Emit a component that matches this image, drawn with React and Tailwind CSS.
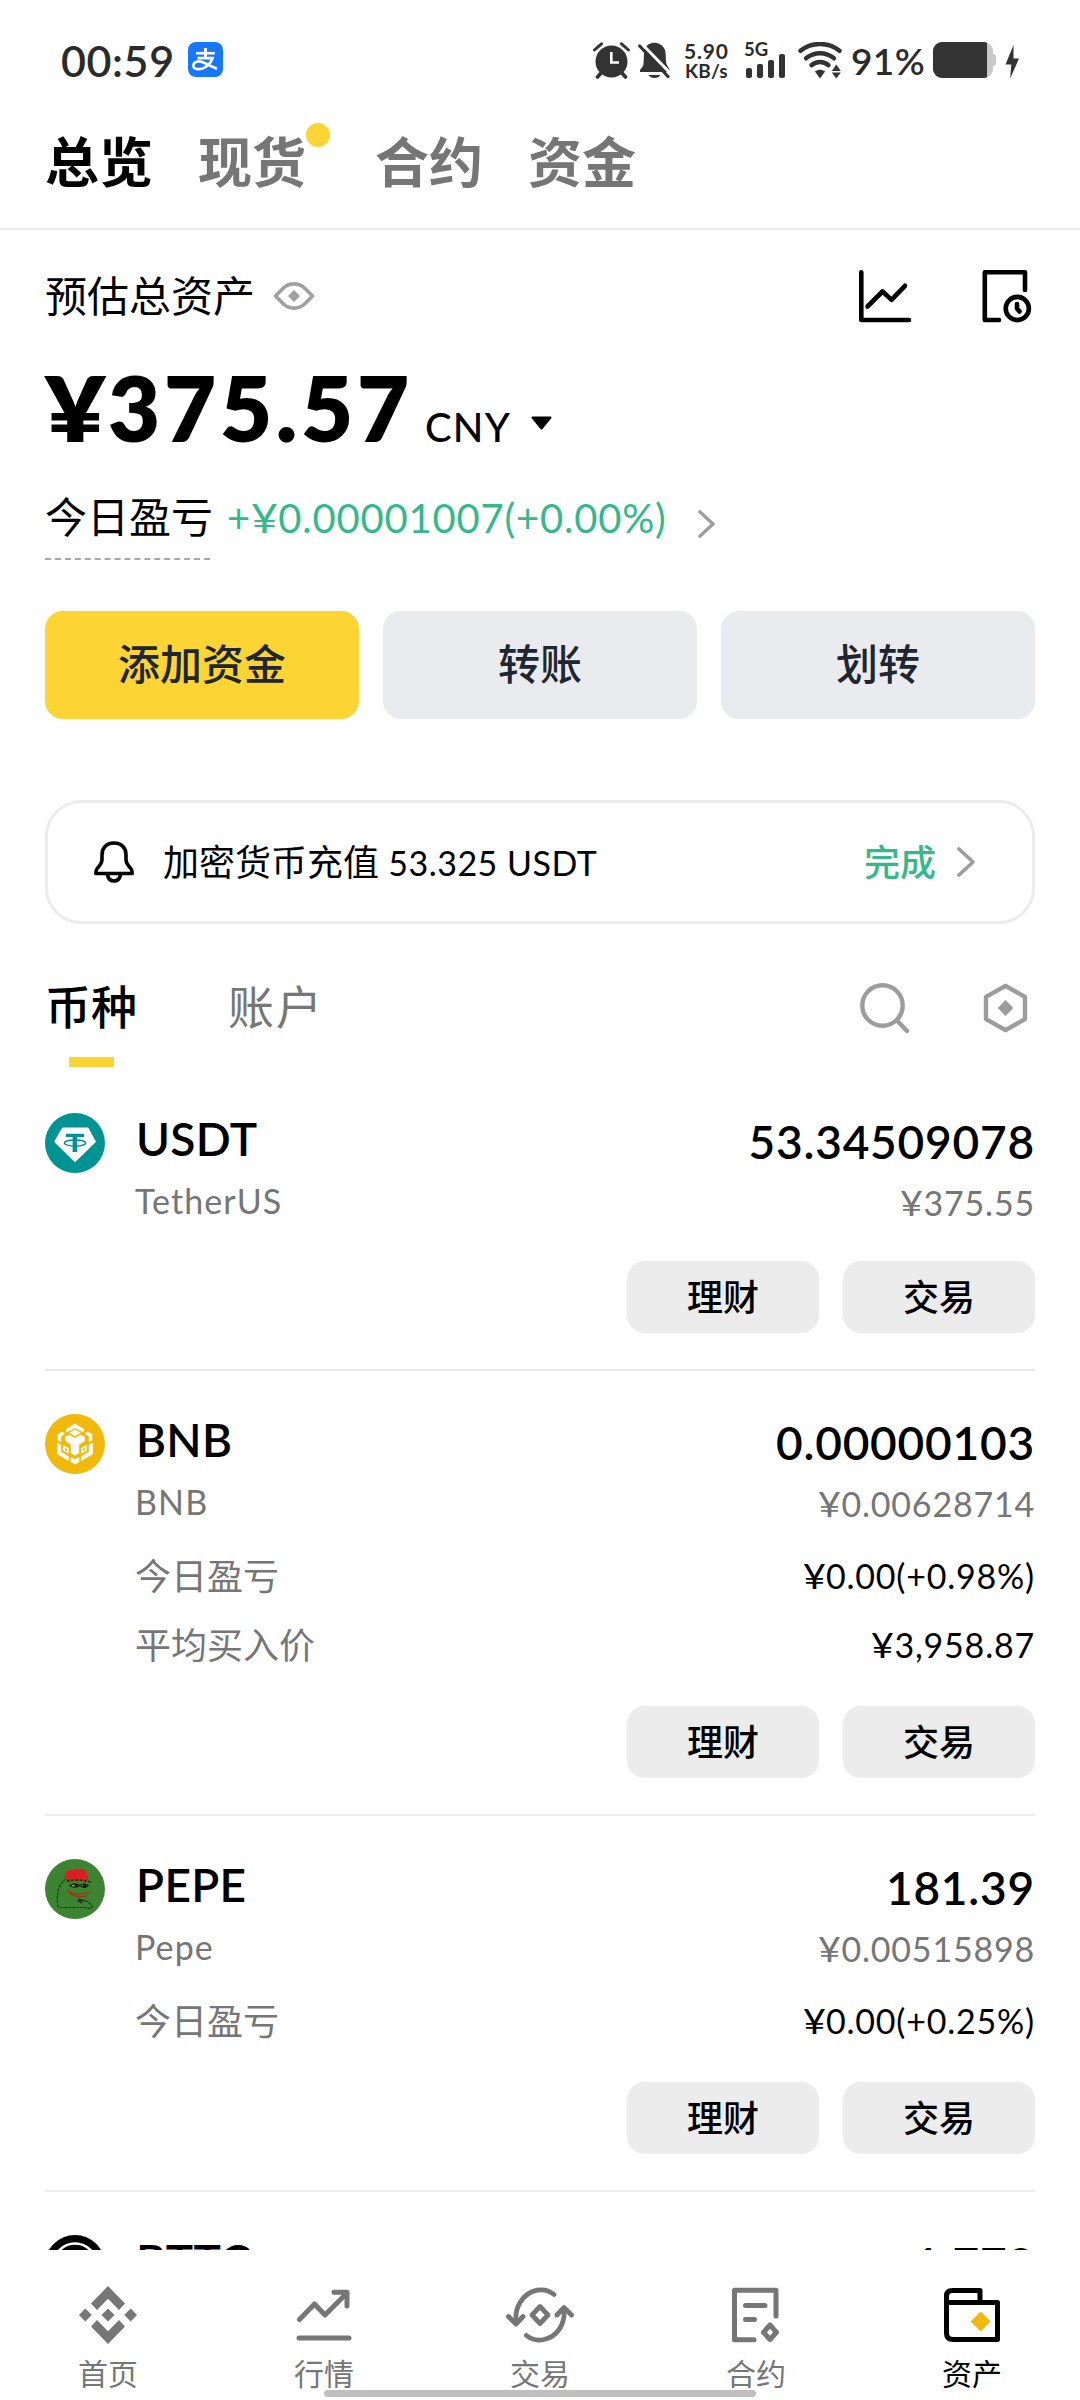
import React from 'react';

/* ---------- status bar icons ---------- */

function AlipayIcon() {
  return (
    <svg width="35" height="35" viewBox="0 0 35 35" className="block">
      <rect width="35" height="35" rx="8" fill="#1677ff" />
      <g fill="none" stroke="#fff" strokeLinecap="butt">
        <path d="M8 11.2H27" strokeWidth="2.6" />
        <path d="M17.5 6V16" strokeWidth="3" />
        <path d="M9.5 16.2H24.5C23.5 19.5 21 22.8 17.5 25C13 28 5.8 28 5.4 23.8C5.2 20 9.8 18.6 14 20C18.5 21.5 23 24.6 29 26.6" strokeWidth="2.7" />
      </g>
    </svg>
  );
}

function AlarmIcon() {
  return (
    <svg width="37" height="37" viewBox="0 0 37 37" className="block">
      <circle cx="18.5" cy="19.5" r="16" fill="#333" />
      <path d="M1.5 8L8.5 1.8M35.5 8L28.5 1.8" stroke="#333" strokeWidth="3" strokeLinecap="round" />
      <path d="M8 31L4.5 35M29 31L32.5 35" stroke="#333" strokeWidth="3.6" strokeLinecap="round" />
      <path d="M18.3 10V20.5H26" fill="none" stroke="#fff" strokeWidth="2.6" />
    </svg>
  );
}

function MutedBellIcon() {
  return (
    <svg width="33" height="37" viewBox="0 0 33 37" className="block">
      <path d="M7 7C10 -1.5 23 -1.5 27 8C28.5 13 27 19 29 23L32 28.5V30H2V28L5 24C6.5 20 5 12 7 7Z" fill="#333" />
      <path d="M10.5 33H22.5C20.5 37 12.5 37 10.5 33Z" fill="#333" />
      <path d="M3.5 1.5L34 33" stroke="#fff" strokeWidth="3" />
      <path d="M1.7 4L30 34.5" stroke="#333" strokeWidth="3.2" strokeLinecap="round" />
    </svg>
  );
}

function WifiIcon() {
  return (
    <svg width="44" height="37" viewBox="0 0 44 37" className="block">
      <g fill="none" stroke="#333" strokeWidth="4.4" strokeLinecap="round">
        <path d="M2.5 8.8C13.5 -.3 30.5 -.3 41.5 8.8" />
        <path d="M8 16.3C16 9.5 28 9.5 36 16.3" />
        <path d="M13.5 23.2C18.5 19 25.5 19 30.5 23.2" />
      </g>
      <path d="M17.5 29.5Q22 26.5 26.5 29.5L22 35.8Z" fill="#333" stroke="#333" strokeLinejoin="round" />
      <path d="M38.3 22.5L42.8 29H33.8ZM38.3 36.5L42.8 30.5H33.8Z" fill="#333" />
    </svg>
  );
}

function BoltIcon() {
  return (
    <svg width="14" height="34" viewBox="0 0 14 34" className="block">
      <path d="M8.5 0L.5 19.5H6.3L5.2 33.5L14 13.5H8.5Z" fill="#333" />
    </svg>
  );
}

function StatusBar() {
  return (
    <div className="flex h-[112px] items-start pt-[42px] pl-[61px] text-[#2b2b2b]">
      <span className="w-[127px] text-[43px] leading-[38px] font-semibold tracking-[0.6px]">00:59</span>
      <AlipayIcon />
      <div className="ml-[370px]"><AlarmIcon /></div>
      <div className="ml-[8px]"><MutedBellIcon /></div>
      <div className="ml-[13px] w-[60px] text-[21px] leading-[20px] font-bold">
        <div className="-mt-[1px] tracking-[0.8px]">5.90</div>
        <div className="pl-[1px] text-[19px] tracking-[0.2px]">KB/s</div>
      </div>
      <div className="w-[54px]">
        <div className="h-[12px] text-[18.5px] leading-[14px] font-bold">5G</div>
        <div className="flex h-[24px] items-end gap-[5px] pl-[2px]">
          <i className="h-[10px] w-[6px] rounded-[2px] bg-[#333]" />
          <i className="h-[14px] w-[6px] rounded-[2px] bg-[#333]" />
          <i className="h-[18px] w-[6px] rounded-[2px] bg-[#333]" />
          <i className="h-[24px] w-[6px] rounded-[2px] bg-[#333]" />
        </div>
      </div>
      <WifiIcon />
      <span className="ml-[9px] w-[82px] text-[37px] leading-[38px] font-semibold tracking-[0.4px]">91%</span>
      <div className="flex items-center">
        <div className="h-[36px] w-[60px] overflow-hidden rounded-[9px] bg-[#c9c9c9]">
          <div className="h-full w-[54px] bg-[#333]" />
        </div>
        <div className="h-[12px] w-[3px] rounded-r-[3px] bg-[#c9c9c9]" />
      </div>
      <div className="mt-[3px] ml-[9px]"><BoltIcon /></div>
    </div>
  );
}

/* ---------- interface icons ---------- */

function EyeIcon() {
  return (
    <svg width="42" height="28" viewBox="0 0 42 28" className="block">
      <path d="M2.5 14L11 5.5C16.5 .7 25.5 .7 31 5.5L39.5 14L31 22.5C25.5 27.3 16.5 27.3 11 22.5Z" fill="none" stroke="#a0a0a0" strokeWidth="3.6" strokeLinejoin="round" />
      <path d="M21 8L27 14L21 20L15 14Z" fill="#a0a0a0" />
    </svg>
  );
}

function ChartIcon() {
  return (
    <svg width="53" height="53" viewBox="0 0 53 53" className="block" fill="none" stroke="#000" strokeWidth="4.6" strokeLinecap="round" strokeLinejoin="round">
      <path d="M2.3 2.3V50H50" />
      <path d="M8.5 36.5L23.5 21.5L32.5 29.8L46 15.8" />
    </svg>
  );
}

function HistoryIcon() {
  return (
    <svg width="50" height="53" viewBox="0 0 50 53" className="block" fill="none" stroke="#000" strokeWidth="4.6" strokeLinecap="round" strokeLinejoin="round">
      <path d="M43 20V2.3H2.8V50H17" />
      <circle cx="35.3" cy="38.5" r="11.6" />
      <path d="M35 34V38.5L37.5 41.5" />
    </svg>
  );
}

function Chevron({ width, height }) {
  return (
    <svg width={width} height={height} viewBox="0 0 18 30" className="block" fill="none" stroke="#9c9c9c" strokeWidth="3.6" strokeLinecap="round" strokeLinejoin="round">
      <path d="M2 2L16 15L2 28" />
    </svg>
  );
}

function BellIcon() {
  return (
    <svg width="40" height="42" viewBox="0 0 40 42" className="block" fill="none" stroke="#000" strokeWidth="3.6" strokeLinejoin="round" strokeLinecap="round">
      <path d="M20 2C12 2 8 7.5 8 14V18.5C8 22.5 5.5 25 3.2 27.5C2 29 1.8 30 1.8 32.5H38.2C38.2 30 38 29 36.8 27.5C34.5 25 32 22.5 32 18.5V14C32 7.5 28 2 20 2Z" />
      <path d="M13.5 34C14.5 38.5 17 40 20 40C23 40 25.5 38.5 26.5 34" />
    </svg>
  );
}

function SearchIcon() {
  return (
    <svg width="51" height="51" viewBox="0 0 51 51" className="block" fill="none" stroke="#9c9c9c" strokeWidth="4.4" strokeLinecap="round">
      <circle cx="22.5" cy="22.5" r="20.2" />
      <path d="M37 37.5L47 48" />
    </svg>
  );
}

function HexIcon() {
  return (
    <svg width="45" height="50" viewBox="0 0 45 50" className="block">
      <path d="M22.5 2.8L42 13.8V36.2L22.5 47.2L3 36.2V13.8Z" fill="none" stroke="#9c9c9c" strokeWidth="4.4" strokeLinejoin="round" />
      <path d="M22.5 17L30.2 25L22.5 33L14.8 25Z" fill="#9c9c9c" />
    </svg>
  );
}

/* ---------- coin logos ---------- */

function UsdtLogo() {
  return (
    <svg width="60" height="60" viewBox="0 0 60 60" className="block">
      <circle cx="30" cy="30" r="30" fill="#009393" />
      <path d="M17.5 15H43L50.5 28.8L30 49L9.5 28.8Z" fill="#fff" stroke="#fff" strokeLinejoin="round" />
      <path d="M21 20.7H39V24H32.2V39H27.6V24H21Z" fill="#009393" />
      <ellipse cx="30" cy="30" rx="10.6" ry="3" fill="none" stroke="#009393" strokeWidth="1.5" />
    </svg>
  );
}

function BnbLogo() {
  return (
    <svg width="60" height="60" viewBox="0 0 60 60" className="block">
      <circle cx="30" cy="30" r="30" fill="#f0b90b" />
      <g fill="#fff" stroke="#fff" strokeWidth=".6" strokeLinejoin="round">
        <path d="M30 10L38.5 15V18L30 13.8L21.5 18V15Z" />
        <path d="M30 15.8L35.3 18.8L30 21.8L24.7 18.8Z" />
        <path d="M13 20.5L17 18L20 19.5L15.8 22.3V27.5L13 26Z" />
        <path d="M47 20.5L43 18L40 19.5L44.2 22.3V27.5L47 26Z" />
        <path d="M20.5 23L24.2 21L30 24.2L35.8 21L39.5 23V27L33.8 30.5V39L30 41.2L26.2 39V30.5L20.5 27Z" />
        <path d="M12.5 29L15.8 31V38L23.5 42.5V46.5L12.5 40Z" />
        <path d="M47.5 29L44.2 31V38L36.5 42.5V46.5L47.5 40Z" />
        <path d="M18.5 31.5L23.5 34.3V39.2L18.5 36.5Z" />
        <path d="M41.5 31.5L36.5 34.3V39.2L41.5 36.5Z" />
        <path d="M26 43.5L30 45.5L34 43.5V47.8L30 50L26 47.8Z" />
      </g>
      <path d="M20 33.8L22 35V37L20 36ZM40 33.8L38 35V37L40 36Z" fill="#f0b90b" />
    </svg>
  );
}

function PepeLogo() {
  return (
    <svg width="60" height="60" viewBox="0 0 60 60" className="block">
      <circle cx="30" cy="30" r="30" fill="#3d8432" />
      <path d="M21 20C12 26 12 37 12.5 46C13 49 16 48.5 20 48.5H40C44 50.5 49 49 46.5 46C44 43 39 40 36 41.5" fill="none" stroke="#12360f" strokeWidth="1.1" strokeDasharray="3 1" />
      <path d="M20 19C19 12 23 11 28 10.8C33 9 41 9.5 41.5 13L43.5 21C38 19.5 33 20.5 29 20C26 21.5 22 21.5 20 19Z" fill="#d92020" />
      <path d="M22 22C29 20.5 38 20.5 47 23.5" fill="none" stroke="#5b1712" strokeWidth="1.8" strokeDasharray="3 1.2" />
      <path d="M25 26.5Q30 23.5 34.5 26.5Q30 29.8 25 26.5ZM35.5 26.5Q39.5 23.8 43 26.5Q39 29.8 35.5 26.5Z" fill="#a9c49d" stroke="#111c0e" strokeWidth="1.4" />
      <circle cx="31" cy="26.5" r="1.5" fill="#111" />
      <circle cx="39.5" cy="26.5" r="1.5" fill="#111" />
      <path d="M22.5 31C26 35.5 36 35.8 44 33.5M24 33.5C28 38 37 38.2 42.5 36.5" fill="none" stroke="#9b3b1c" strokeWidth="1.7" />
      <path d="M32 41.5L36 43.5L34 40L39 42.5" fill="none" stroke="#12260f" strokeWidth="1.1" />
    </svg>
  );
}

function BttcLogo() {
  return (
    <svg width="60" height="60" viewBox="0 0 60 60" className="block">
      <circle cx="30" cy="30" r="30" fill="#000" />
      <circle cx="30" cy="30" r="21.5" fill="none" stroke="#fff" strokeWidth="2.6" />
    </svg>
  );
}

/* ---------- assets ---------- */

const assets = [
  { symbol: 'USDT', name: 'TetherUS', amount: '53.34509078', value: '375.55', Logo: UsdtLogo, rows: [] },
  {
    symbol: 'BNB', name: 'BNB', amount: '0.00000103', value: '0.00628714', Logo: BnbLogo,
    rows: [['今日盈亏', '0.00(+0.98%)'], ['平均买入价', '3,958.87']],
  },
  {
    symbol: 'PEPE', name: 'Pepe', amount: '181.39', value: '0.00515898', Logo: PepeLogo,
    rows: [['今日盈亏', '0.00(+0.25%)']],
  },
  { symbol: 'BTTC', name: 'BitTorrent', amount: '1.778', value: '0.00', Logo: BttcLogo, rows: [] },
];

/* Yen sign, drawn a little wider than the digits beside it */
function Yen() {
  return <span className="mr-[0.08em] inline-block origin-left scale-x-[1.16]">¥</span>;
}

function PillButton({ children }) {
  return (
    <button className="h-[72px] w-[192px] rounded-[18px] bg-[#ececec] text-[36px] leading-[72px] font-medium text-black">
      {children}
    </button>
  );
}

function Asset({ symbol, name, amount, value, Logo, rows }) {
  return (
    <section className="flex border-b-2 border-[#ececec] pt-[43px] pb-[36px]">
      <div className="w-[90px] shrink-0"><Logo /></div>
      <div className="flex-1">
        <div className="flex justify-between">
          <div>
            <div className="pl-[1px] text-[46px] leading-[52px] font-semibold tracking-[0.3px]">{symbol}</div>
            <div className="mt-[14px] text-[34px] leading-[44px] tracking-[1.1px] text-[#767676]">{name}</div>
          </div>
          <div className="pt-[3px] text-right">
            <div className="text-[46px] leading-[52px] font-semibold tracking-[0.8px]">{amount}</div>
            <div className="mt-[13px] -mb-[2px] text-[34px] leading-[44px] tracking-[0.8px] text-[#767676]"><Yen />{value}</div>
          </div>
        </div>
        {rows.length > 0 && (
          <div className="flex flex-col gap-[25px] pt-[30px] pb-[1px]">
            {rows.map(([label, text]) => (
              <div key={label} className="flex justify-between text-[34px] leading-[44px] tracking-[0.8px]">
                <span className="text-[36px] tracking-normal text-[#767676]">{label}</span>
                <span><Yen />{text}</span>
              </div>
            ))}
          </div>
        )}
        <div className="mt-[38px] flex justify-end gap-[24px]">
          <PillButton>理财</PillButton>
          <PillButton>交易</PillButton>
        </div>
      </div>
    </section>
  );
}

/* ---------- bottom navigation ---------- */

function HomeIcon() {
  return (
    <svg width="58" height="58" viewBox="0 0 58 58" className="block" fill="#767676">
      <path d="M29 0L46 17.5L40 24L29 12.7L18 24L12 17.5Z" />
      <path d="M29 58L46 40.5L40 34L29 45.3L18 34L12 40.5Z" />
      <path d="M29 22.5L35.5 29L29 35.5L22.5 29Z" />
      <path d="M6.3 22.5L12.8 29L6.3 35.5L0 29Z" />
      <path d="M51.7 22.5L58 29L51.7 35.5L45.2 29Z" />
    </svg>
  );
}

function MarketIcon() {
  return (
    <svg width="56" height="52" viewBox="0 0 56 52" className="block" fill="none" stroke="#767676" strokeWidth="5" strokeLinecap="round" strokeLinejoin="round">
      <path d="M3.5 30.5L18.5 15L29 26L50 5" />
      <path d="M38 3.3H51V17" />
      <path d="M3 49H53" />
    </svg>
  );
}

function TradeIcon() {
  return (
    <svg width="68" height="56" viewBox="0 0 68 56" className="block" fill="none" stroke="#767676" strokeWidth="4.8" strokeLinecap="round" strokeLinejoin="round">
      <path d="M10 35C8.5 21 16 6.5 31 3.2C37.5 2 43.5 3.8 48 7.5" />
      <path d="M2.5 29.5L10 37L17 29.5" />
      <path d="M58 22C59.5 36 52 49.5 38 52.5C31.5 54 25 52.2 20.5 48.5" />
      <path d="M51 28L58 20.5L65.5 28" />
      <path d="M34 19.5L42 28L34 36.5L26 28Z" />
    </svg>
  );
}

function FuturesIcon() {
  return (
    <svg width="50" height="56" viewBox="0 0 50 56" className="block" fill="none" stroke="#767676" strokeWidth="5" strokeLinecap="round" strokeLinejoin="round">
      <path d="M45 29V3.3H3.5V52.7H23" />
      <path d="M14.5 18.5H34M14.5 32.5H23.5" />
      <path d="M39 38L45.5 45.3L39 52.5L32.5 45.3Z" />
    </svg>
  );
}

function WalletIcon() {
  return (
    <svg width="56" height="56" viewBox="0 0 56 56" className="block" fill="none" stroke="#000" strokeWidth="5" strokeLinejoin="round" strokeLinecap="round">
      <path d="M2.5 15.5V9C2.5 5 5 3.5 8.5 3.5H36V15.5" />
      <path d="M2.5 15.5H53.5V52.5H9.5C5 52.5 2.5 50.5 2.5 46.5Z" />
      <path d="M36.7 24.5L46.7 34.5L36.7 44.5L26.7 34.5Z" fill="#f0b90b" stroke="none" />
    </svg>
  );
}

const navItems = [
  ['首页', HomeIcon],
  ['行情', MarketIcon],
  ['交易', TradeIcon],
  ['合约', FuturesIcon],
  ['资产', WalletIcon],
];

function BottomNav() {
  return (
    <nav className="relative grid h-[150px] grid-cols-5 bg-white">
      {navItems.map(([label, Icon], i) => (
        <div key={label} className="flex flex-col items-center pt-[35px]">
          <div className="flex h-[60px] items-center"><Icon /></div>
          <span className={i === 4 ? 'mt-[8px] text-[30px] leading-[40px] text-black' : 'mt-[8px] text-[30px] leading-[40px] text-[#767676]'}>
            {label}
          </span>
        </div>
      ))}
      <div className="absolute bottom-[3px] left-1/2 h-[7px] w-[432px] -translate-x-1/2 rounded-full bg-[#bfbfbf]" />
    </nav>
  );
}

/* ---------- page ---------- */

export default function App() {
  return (
    <div className="flex h-[2400px] w-[1080px] flex-col overflow-hidden bg-white font-['Lato','Noto_Sans_CJK_SC',sans-serif] text-black">
      <main className="h-[2250px] overflow-hidden">
        <StatusBar />

        <header className="flex h-[118px] gap-[45px] border-b-2 border-[#ececec] pt-[21px] pl-[45px] text-[54px] leading-[60px] font-bold text-[#767676]">
          <span className="text-black">总览</span>
          <span className="relative mr-[24px]">
            现货
            <i className="absolute -top-[10px] left-full size-[24px] rounded-full bg-[#fcd535]" />
          </span>
          <span>合约</span>
          <span>资金</span>
        </header>

        <div className="px-[45px]">
          <div className="mt-[36px] flex h-[60px] items-center">
            <span className="w-[228px] text-[42px] leading-[60px]">预估总资产</span>
            <EyeIcon />
            <div className="mr-[3px] ml-auto flex gap-[70px]">
              <ChartIcon />
              <HistoryIcon />
            </div>
          </div>

          <div className="mt-[31px] flex h-[100px] items-baseline">
            <span className="w-[380px] text-[90px] leading-[100px] font-extrabold tracking-[3.7px] whitespace-nowrap"><Yen />375.57</span>
            <span className="w-[106px] text-[40px] leading-[100px] font-medium tracking-[1.2px]">CNY</span>
            <svg width="21" height="14" viewBox="0 0 21 14" className="relative -top-[12px] block">
              <path d="M1.5 1.5H19.5L10.5 12.5Z" fill="#000" stroke="#000" strokeWidth="2" strokeLinejoin="round" />
            </svg>
          </div>

          <div className="mt-[30px] flex h-[73px] items-start leading-[60px]">
            <span className="h-[73px] w-[165px] border-b-2 border-dashed border-[#a8a8a8] text-[42px] whitespace-nowrap">今日盈亏</span>
            <span className="ml-[17px] w-[471px] pt-[1px] text-[40px] tracking-[0.8px] whitespace-nowrap text-[#35b98a]">+<Yen />0.00001007(+0.00%)</span>
            <div className="pt-[23px]"><Chevron width="17" height="28" /></div>
          </div>

          <div className="mt-[51px] grid h-[108px] grid-cols-3 gap-[24px] text-[42px] font-medium text-[#202630]">
            <button className="rounded-[18px] bg-[#fcd535] pb-[2px]">添加资金</button>
            <button className="rounded-[18px] bg-[#eaebef] pb-[2px]">转账</button>
            <button className="rounded-[18px] bg-[#eaebef] pb-[2px]">划转</button>
          </div>

          <div className="mt-[81px] flex h-[124px] items-center rounded-[36px] border-[3px] border-[#ececec] pr-[57px] pl-[46px]">
            <BellIcon />
            <span className="ml-[29px] text-[36px] leading-[60px]">
              加密货币充值 <span className="text-[34px] tracking-[0.5px]">53.325 USDT</span>
            </span>
            <span className="mr-[21px] ml-auto text-[36px] leading-[60px] font-medium text-[#35b98a]">完成</span>
            <Chevron width="18" height="30" />
          </div>

          <div className="mt-[53px] flex h-[90px] text-[46px] leading-[60px] whitespace-nowrap">
            <div className="flex w-[92px] flex-col items-center font-medium">
              币种
              <i className="mt-[20px] h-[10px] w-[45px] bg-[#fcd535]" />
            </div>
            <span className="ml-[91px] tracking-[2px] text-[#767676]">账户</span>
            <div className="mr-[7px] ml-auto flex gap-[72px] pt-[6px]">
              <SearchIcon />
              <HexIcon />
            </div>
          </div>

          <div className="pt-[3px]">
            {assets.map((asset) => <Asset key={asset.symbol} {...asset} />)}
          </div>
        </div>
      </main>
      <BottomNav />
    </div>
  );
}
